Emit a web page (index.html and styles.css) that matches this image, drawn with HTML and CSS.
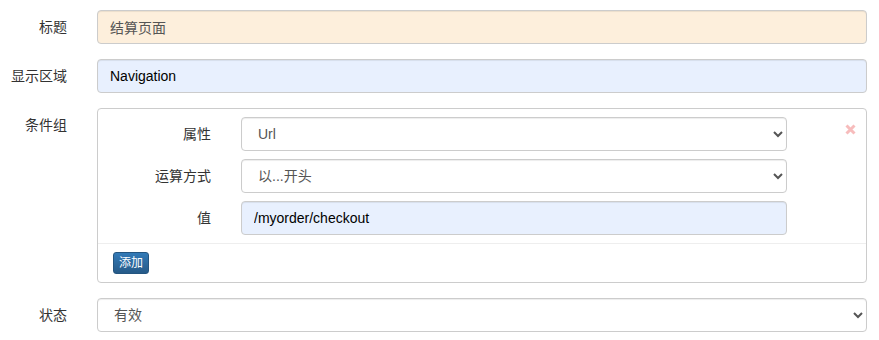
FILE: index.html
```html
<!DOCTYPE html>
<html lang="zh-CN">
<head>
  <meta charset="UTF-8" />
  <title>规则编辑</title>
  <link rel="stylesheet" href="styles.css">
</head>
<body>
  <form class="form-horizontal">
    <div class="form-row">
      <label class="form-label">标题</label>
      <div class="form-field">
        <input class="form-control title-input" type="text" value="结算页面">
      </div>
    </div>
    <div class="form-row">
      <label class="form-label">显示区域</label>
      <div class="form-field">
        <input class="form-control autofill" type="text" value="Navigation">
      </div>
    </div>
    <div class="form-row">
      <label class="form-label">条件组</label>
      <div class="form-field">
        <div class="panel">
          <div class="panel-body">
            <div class="cond-row">
              <label class="cond-label">属性</label>
              <div class="cond-field">
                <select class="form-control">
                  <option>Url</option>
                </select>
              </div>
              <div class="cond-remove">
                <svg class="icon-remove" width="11" height="11" viewBox="0 0 11 11">
                  <path d="M1.5 1.5 L9.5 9.5 M9.5 1.5 L1.5 9.5" />
                </svg>
              </div>
            </div>
            <div class="cond-row">
              <label class="cond-label">运算方式</label>
              <div class="cond-field">
                <select class="form-control">
                  <option>以...开头</option>
                </select>
              </div>
              <div class="cond-remove"></div>
            </div>
            <div class="cond-row">
              <label class="cond-label">值</label>
              <div class="cond-field">
                <input class="form-control autofill" type="text" value="/myorder/checkout">
              </div>
              <div class="cond-remove"></div>
            </div>
          </div>
          <div class="panel-footer">
            <button type="button" class="btn-add">添加</button>
          </div>
        </div>
      </div>
    </div>
    <div class="form-row">
      <label class="form-label">状态</label>
      <div class="form-field">
        <select class="form-control">
          <option>有效</option>
        </select>
      </div>
    </div>
  </form>
</body>
</html>
```

FILE: styles.css
```css
body {
  margin: 0;
  padding-top: 10px;
  font-family: "Liberation Sans", "Noto Sans CJK SC", sans-serif;
  font-size: 14px;
  color: #333;
  background: #fff;
}
.form-row {
  display: flex;
  margin-bottom: 15px;
}
.form-label {
  width: 82px;
  box-sizing: border-box;
  padding: 7px 15px 0 0;
  text-align: right;
  line-height: 20px;
}
.form-field {
  flex: 1;
  padding: 0 12px 0 15px;
}
.form-control {
  display: block;
  width: 100%;
  height: 34px;
  box-sizing: border-box;
  padding: 6px 12px;
  font-family: inherit;
  font-size: 14px;
  line-height: 20px;
  color: #555;
  background: #fff;
  border: 1px solid #ccc;
  border-radius: 4px;
  box-shadow: inset 0 1px 1px rgba(0,0,0,0.075);
  margin: 0;
}
select.form-control {
  padding: 6px 8px 6px 12px;
}
.title-input {
  background: #fdefdc;
}
.autofill {
  background: #e8f0fe;
  color: #000;
}
.panel {
  border: 1px solid #ccc;
  border-radius: 4px;
}
.panel-body {
  padding: 8px 0 0;
}
.cond-row {
  display: flex;
  margin-bottom: 8px;
}
.cond-label {
  width: 128px;
  box-sizing: border-box;
  padding: 7px 15px 0 0;
  text-align: right;
  line-height: 20px;
}
.cond-field {
  flex: 1;
  padding-left: 15px;
}
.cond-remove {
  width: 79px;
  padding: 7px 0 0 58px;
  box-sizing: border-box;
}
.icon-remove {
  display: block;
  stroke: #f7bcbc;
  stroke-width: 3;
  fill: none;
}
.panel-footer {
  border-top: 1px solid #eee;
  padding: 8px 15px 8px;
}
.btn-add {
  display: block;
  height: 22px;
  padding: 1px 5px;
  font-family: inherit;
  font-size: 12px;
  line-height: 18px;
  color: #fff;
  background: linear-gradient(to bottom, #337ab7, #265a88);
  border: 1px solid #245580;
  border-radius: 3px;
  cursor: pointer;
}
```
